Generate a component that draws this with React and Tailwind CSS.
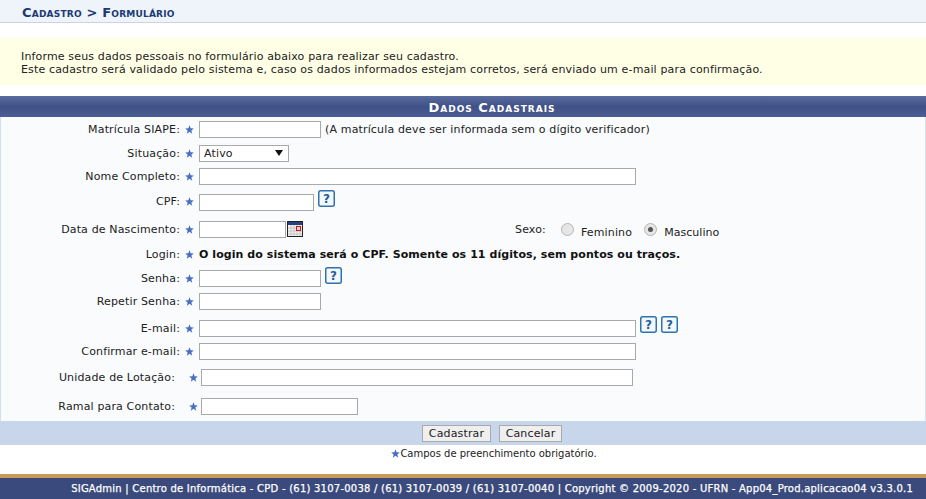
const font = "font-['DejaVu_Sans',Verdana,sans-serif]"

function Star({ className = '' }) {
  return (
    <svg className={className} width="9" height="9" viewBox="0 0 10 10">
      <polygon points="5,0.3 6.3,3.6 9.8,3.8 7.1,6 8,9.6 5,7.6 2,9.6 2.9,6 0.2,3.8 3.7,3.6" fill="#4a6fc0" />
    </svg>
  )
}

function HelpIcon() {
  return (
    <svg width="17" height="17" viewBox="0 0 17 17" className="shrink-0">
      <rect x="0.75" y="0.75" width="15.5" height="15.5" rx="2" fill="#f3f8fd" stroke="#2f72ad" strokeWidth="1.5" />
      <text x="8.5" y="13" textAnchor="middle" fontSize="12" fontWeight="700" fontFamily="DejaVu Sans, sans-serif" fill="#1f5f9e">?</text>
    </svg>
  )
}

function CalendarIcon() {
  return (
    <svg width="16" height="16" viewBox="0 0 16 16" className="ml-px shrink-0">
      <rect x="0.5" y="0.5" width="15" height="15" fill="#f4f2f2" stroke="#222" />
      <rect x="1" y="1" width="14" height="3" fill="#27407f" />
      <path d="M4 4v11M7 4v11M10 4v11M13 4v11M1 7h14M1 10h14M1 13h14" stroke="#c8c4c4" strokeWidth="1" />
      <rect x="9.5" y="5.5" width="4" height="4" fill="#f6d0d0" stroke="#c81818" />
    </svg>
  )
}

function Field({ className }) {
  return <input type="text" className={`h-[17px] border border-[#a9a9a9] bg-white ${className}`} />
}

function Row({ label, height, labelClass = 'w-[179px]', starClass = 'ml-[5px] mr-[5px]', children }) {
  return (
    <div className={`flex items-center ${height}`}>
      <span className={`text-right shrink-0 ${labelClass}`}>{label}</span>
      <Star className={`shrink-0 ${starClass}`} />
      {children}
    </div>
  )
}

function Radio({ checked }) {
  return (
    <span className="flex h-[13px] w-[13px] shrink-0 items-center justify-center rounded-full border border-[#b5b5b5] bg-[#e6e6e6]">
      {checked && <span className="h-[5px] w-[5px] rounded-full bg-[#555]" />}
    </span>
  )
}

export default function App() {
  return (
    <div className={`${font} h-[499px] w-[926px] overflow-hidden bg-white text-[11px] leading-[13px] tracking-[0.15px] text-[#222]`}>
      <div className="flex h-[23px] items-center border-b border-[#c8d4e6] bg-[#eff3fa] pl-[22px] pt-[2px]">
        <span className="text-[13px] font-bold tracking-[0.2px] text-[#1b3a73] [font-variant:small-caps]">Cadastro &gt; Formulário</span>
      </div>

      <div className="mt-[15px] h-[47px] bg-[#ffffe6] pl-[21px] pt-[12px] leading-[13px]">
        <p>Informe seus dados pessoais no formulário abaixo para realizar seu cadastro.</p>
        <p>Este cadastro será validado pelo sistema e, caso os dados informados estejam corretos, será enviado um e-mail para confirmação.</p>
      </div>

      <div className="mt-[11px] flex h-[21px] items-center justify-center bg-gradient-to-b from-[#5a6b9d] via-[#3f5187] to-[#4c5d92] pl-[58px] pt-px text-[13px] font-bold tracking-[1px] text-white [font-variant:small-caps]">
        Dados Cadastrais
      </div>

      <div className="h-[304px] border-x border-[#d3deee] bg-[#f9fbfd] pt-px">
        <Row label="Matrícula SIAPE:" height="h-[23px]">
          <Field className="w-[122px]" />
          <span className="ml-[4px]">(A matrícula deve ser informada sem o dígito verificador)</span>
        </Row>
        <Row label="Situação:" height="h-[25px]">
          <div className="relative">
            <select className="h-[17px] w-[90px] appearance-none border border-[#a9a9a9] bg-white pl-[4px] text-[11px] leading-[13px]">
              <option>Ativo</option>
            </select>
            <svg className="absolute right-[6px] top-[5px]" width="8" height="6" viewBox="0 0 8 6">
              <polygon points="0,0 8,0 4,6" fill="#111" />
            </svg>
          </div>
        </Row>
        <Row label="Nome Completo:" height="h-[20px]">
          <Field className="w-[437px]" />
        </Row>
        <Row label="CPF:" height="h-[30px]">
          <Field className="mt-[2px] w-[115px]" />
          <span className="-mt-[6px] ml-[4px]"><HelpIcon /></span>
        </Row>
        <div className="mt-[3px]">
          <Row label="Data de Nascimento:" height="h-[20px]">
            <Field className="w-[87px]" />
            <CalendarIcon />
            <span className="ml-[212px]">Sexo:</span>
            <span className="ml-[15px]"><Radio /></span>
            <span className="ml-[7px] mt-[6px]">Feminino</span>
            <span className="ml-[12px]"><Radio checked /></span>
            <span className="ml-[7px] mt-[6px] tracking-[0.05px]">Masculino</span>
          </Row>
        </div>
        <Row label="Login:" height="h-[31px]">
          <span className="font-bold tracking-[0.07px] text-[#111]">O login do sistema será o CPF. Somente os 11 dígitos, sem pontos ou traços.</span>
        </Row>
        <Row label="Senha:" height="h-[16px]">
          <Field className="w-[122px]" />
          <span className="-mt-[6px] ml-[4px]"><HelpIcon /></span>
        </Row>
        <Row label="Repetir Senha:" height="h-[30px]">
          <Field className="w-[122px]" />
        </Row>
        <Row label="E-mail:" height="h-[24px]">
          <Field className="w-[437px]" />
          <span className="-mt-[8px] ml-[4px]"><HelpIcon /></span>
          <span className="-mt-[8px] ml-[4px]"><HelpIcon /></span>
        </Row>
        <Row label="Confirmar e-mail:" height="h-[22px]">
          <Field className="w-[437px]" />
        </Row>
        <Row label="Unidade de Lotação:" height="h-[30px]" labelClass="w-[174px]" starClass="ml-[14px] mr-[3px]">
          <Field className="w-[432px]" />
        </Row>
        <Row label="Ramal para Contato:" height="h-[28px]" labelClass="w-[174px]" starClass="ml-[14px] mr-[3px]">
          <Field className="w-[157px]" />
        </Row>
      </div>

      <div className="flex h-[24px] items-center justify-center gap-[8px] bg-[#c8d6ec] pl-[58px]">
        <button className="h-[17px] w-[69px] border border-[#a9a9a9] bg-[#efefef] text-[11px] leading-[13px] text-[#222]">Cadastrar</button>
        <button className="h-[17px] w-[63px] border border-[#a9a9a9] bg-[#efefef] text-[11px] leading-[13px] text-[#222]">Cancelar</button>
      </div>

      <div className="flex h-[17px] items-center justify-center pl-[62px] text-[10px] tracking-normal">
        <Star />
        <span>Campos de preenchimento obrigatório.</span>
      </div>

      <div className="mt-[12px] flex h-[25px] items-center justify-end border-t-[4px] border-[#c89a5c] bg-[#3b4a7c] pr-[13px] text-[10px] tracking-[0.23px] text-white [-webkit-text-stroke:0.25px_white]">
        <span>SIGAdmin | Centro de Informática - CPD - (61) 3107-0038 / (61) 3107-0039 / (61) 3107-0040 | Copyright © 2009-2020 - UFRN - App04_Prod.aplicacao04 v3.3.0.1</span>
      </div>
    </div>
  )
}
